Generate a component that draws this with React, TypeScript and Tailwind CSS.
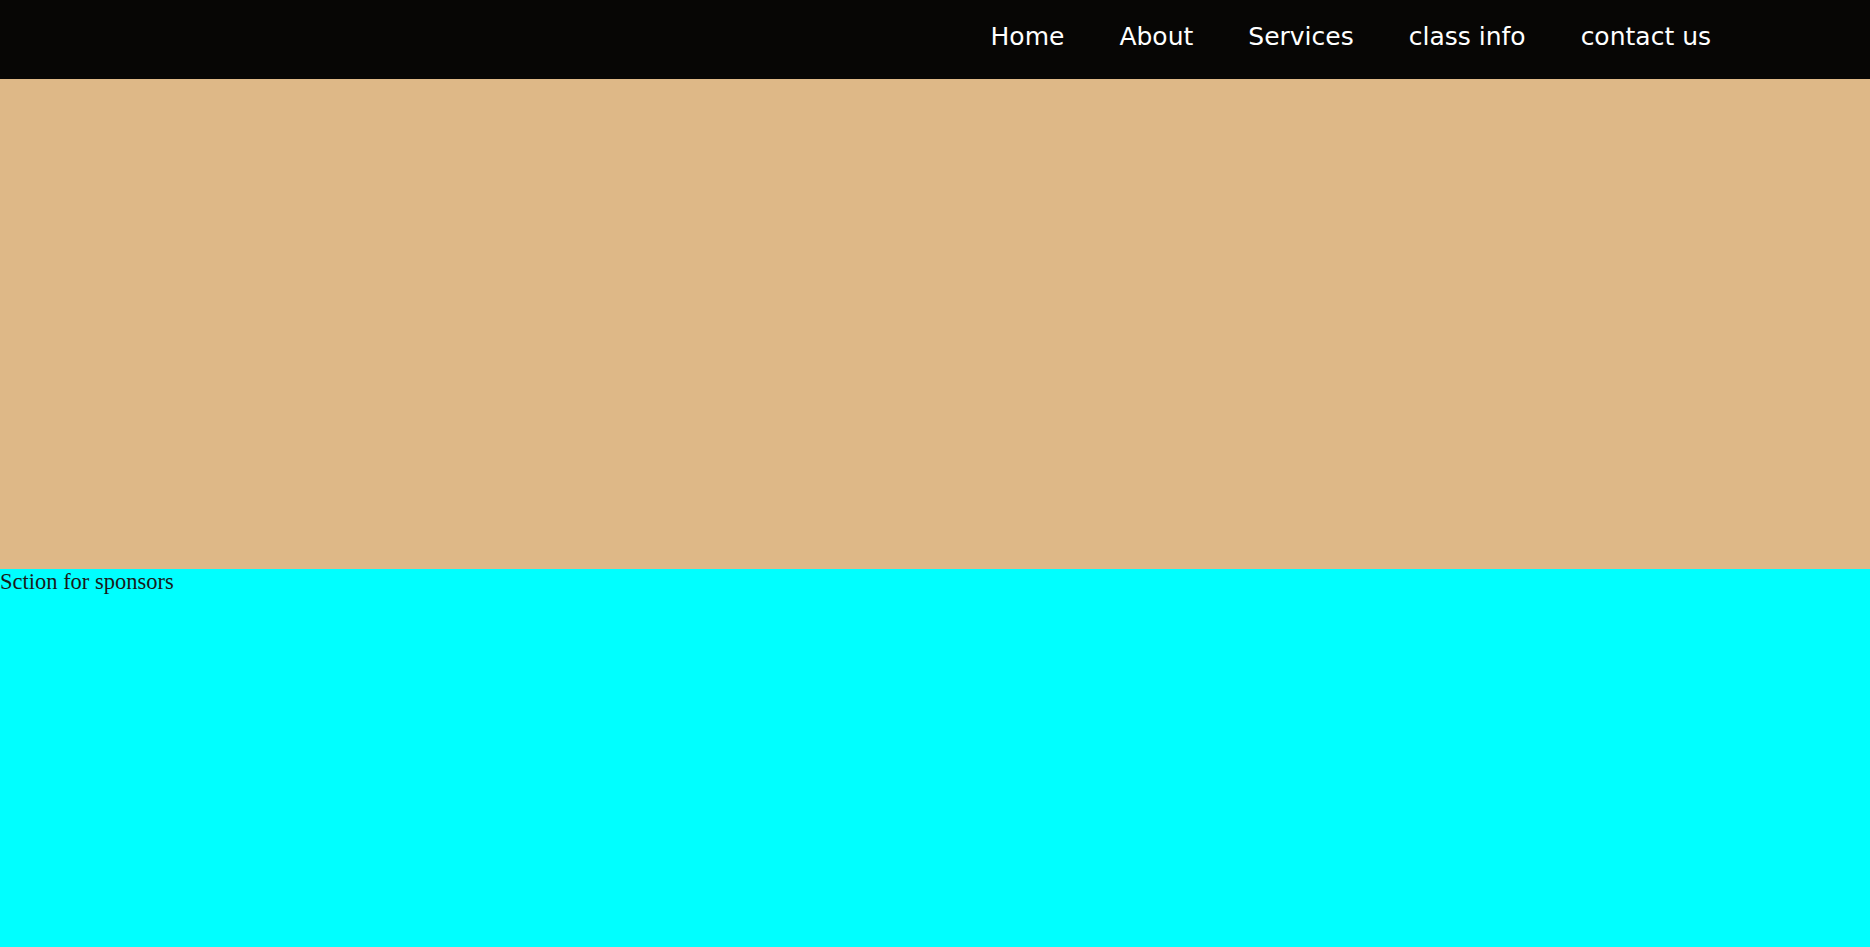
import React from 'react';

const links = ['Home', 'About', 'Services', 'class info', 'contact us'];

const App: React.FC = () => {
  return (
    <div className="min-h-[947px] w-full flex flex-col">
      <header className="h-[79px] bg-[#070605] flex items-center justify-end pr-[159px]">
        <nav>
          <ul className="flex items-center gap-[55px] pb-[6px] text-white text-[25px] font-['Comic_Sans_MS','DejaVu_Sans',sans-serif]">
            {links.map((l) => (
              <li key={l}>
                <a href="#">{l}</a>
              </li>
            ))}
          </ul>
        </nav>
      </header>
      <section className="h-[490px] bg-[#deb887]" />
      <section className="flex-1 bg-[#00ffff] text-[#1a1a1a] text-[22.5px] leading-[25px] font-['Liberation_Serif',serif]">
        Sction for sponsors
      </section>
    </div>
  );
};

export default App;
